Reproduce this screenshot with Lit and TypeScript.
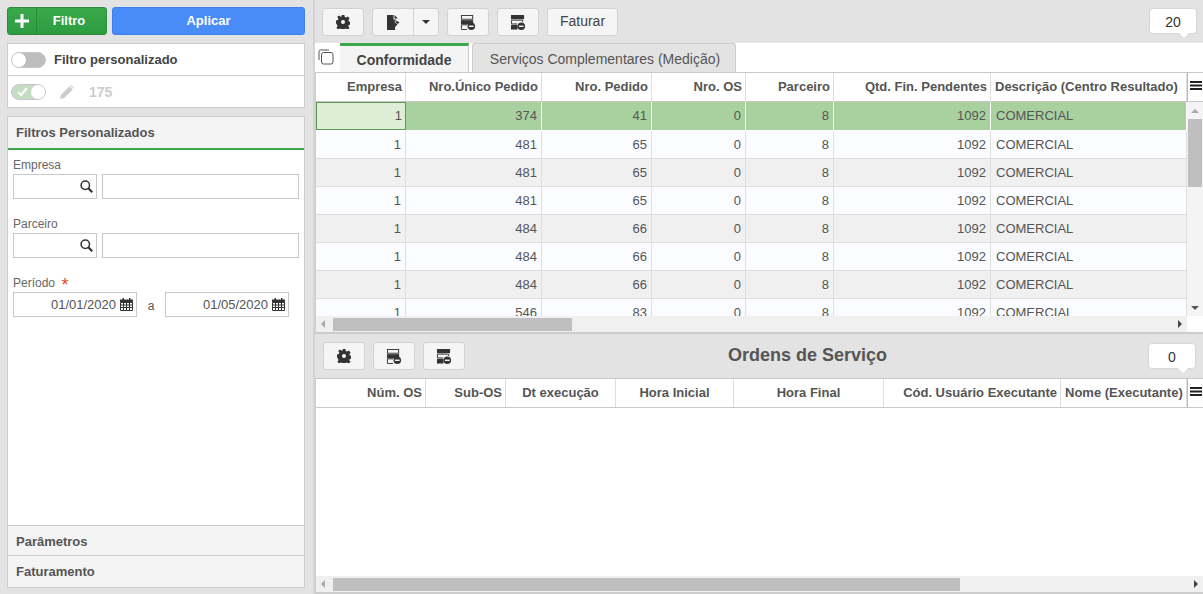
import { LitElement, html, css, svg } from "lit";
import { customElement } from "lit/decorators.js";

type Col = { label: string; width: number; align?: string };

const mainCols: Col[] = [
  { label: "Empresa", width: 90 },
  { label: "Nro.Único Pedido", width: 136 },
  { label: "Nro. Pedido", width: 110 },
  { label: "Nro. OS", width: 94 },
  { label: "Parceiro", width: 88 },
  { label: "Qtd. Fin. Pendentes", width: 157 },
  { label: "Descrição (Centro Resultado)", width: 196, align: "left" },
];

const osCols: Col[] = [
  { label: "Núm. OS", width: 110 },
  { label: "Sub-OS", width: 80 },
  { label: "Dt execução", width: 110, align: "center" },
  { label: "Hora Inicial", width: 118, align: "center" },
  { label: "Hora Final", width: 150, align: "center" },
  { label: "Cód. Usuário Executante", width: 177 },
  { label: "Nome (Executante)", width: 126, align: "left" },
];

const rows = [
  [1, 374, 41],
  [1, 481, 65],
  [1, 481, 65],
  [1, 481, 65],
  [1, 484, 66],
  [1, 484, 66],
  [1, 484, 66],
  [1, 546, 83],
].map((r) => [...r, 0, 8, 1092, "COMERCIAL"]);

const template = (cols: Col[]) => cols.map((c) => c.width + "px").join(" ");

const gear = svg`<svg width="14" height="14" viewBox="0 0 14 14"><path fill="#333" d="M5.6 0h2.8l.4 2 1.3.6L11.900 1.500l1.700 2-1.200 1.700.5 1.300 1.900.4v2.800l-2 .4-.5 1.200 1.200 1.700-1.900 1.700-1.700-1.200-1.300.5-.4 1.900H5.600l-.4-2-1.300-.5-1.700 1.200-1.800-1.800 1.200-1.700-.5-1.200L0 8.200V5.500l1.900-.4.500-1.300L1.200 2.100 3 .5l1.800 1.200 1-.4z"/><circle cx="7" cy="7" r="2" fill="#f5f5f5"/></svg>`;

const docIcon = svg`<svg width="13" height="15" viewBox="0 0 13 15"><path fill="#333" d="M0 0h6.500v4.500H9L7.500 7l3 2.500L8 12v3H0z"/><path fill="#333" d="M7.500 0L11 3.500H7.500zM9 5.500l3.500 2L10.500 9 8.500 7.300z"/></svg>`;

const stackA = svg`<svg width="16" height="15" viewBox="0 0 17 16"><rect x="1.500" y=".5" width="12" height="4" fill="none" stroke="#333"/><rect x="1" y="5.500" width="13" height="4.500" fill="#333"/><path d="M1.500 10.500v5h6" fill="none" stroke="#333"/><path d="M1.500 10.500h6" fill="none" stroke="#333"/><circle cx="12" cy="12" r="4" fill="#333"/><rect x="9.500" y="11.300" width="5" height="1.500" fill="#f5f5f5"/></svg>`;

const stackB = svg`<svg width="16" height="15" viewBox="0 0 17 16"><rect x="1" y="0" width="14" height="4.500" fill="#333"/><path d="M7.500 9.500h-6v-4h12v2" fill="none" stroke="#333"/><rect x="1" y="10.500" width="7" height="5" fill="#333"/><circle cx="12" cy="12" r="4" fill="#333"/><rect x="9.500" y="11.300" width="5" height="1.500" fill="#f5f5f5"/></svg>`;

const searchIcon = svg`<svg class="field-icon" width="13" height="13" viewBox="0 0 13 13"><circle cx="5.300" cy="5.300" r="4.200" fill="none" stroke="#333" stroke-width="1.500"/><path d="M8.300 8.300l3.900 3.900" stroke="#333" stroke-width="2.200"/></svg>`;

const calendarIcon = svg`<svg class="field-icon" width="13" height="13" viewBox="0 0 13 13"><path fill="#333" d="M0 1.500h2.500V0h1.500v1.500h5V0h1.500v1.500H13V4H0z"/><path fill="none" stroke="#333" d="M.5 4.500h12v8H.5zM.5 7h12M.5 9.500h12M3.500 4.500v8M6.500 4.500v8M9.500 4.500v8"/></svg>`;

const pencil = svg`<svg width="14" height="14" viewBox="0 0 14 14"><path fill="#ccc" d="M0 14l1-4.200L9.600 1.200l3.200 3.200L4.200 13zM10.400.5l.9-.5 2.700 2.700-.5.900z"/></svg>`;

const copyIcon = svg`<svg width="16" height="16" viewBox="0 0 16 16" fill="none" stroke="#555"><path d="M1 11V2.500Q1 1 2.500 1H11"/><rect x="3.500" y="3.500" width="11.500" height="11.500" rx="2" fill="#fff"/></svg>`;

const menuIcon = svg`<svg width="12" height="9" viewBox="0 0 12 9"><path fill="#222" d="M0 0h12v2H0zM0 3.500h12v2H0zM0 7h12v2H0z"/></svg>`;

@customElement("app-root")
export class AppRoot extends LitElement {
  static styles = css`
    :host {
      display: flex;
      width: 1203px;
      height: 594px;
      overflow: hidden;
      background: #e3e3e3;
      font-family: "Liberation Sans", Arial, sans-serif;
      font-size: 13px;
      color: #555;
    }

    .side {
      box-sizing: border-box;
      width: 315px;
      flex: none;
      padding: 7px 8px 6px 7px;
      border-right: 2px solid #d4d4d4;
      display: flex;
      flex-direction: column;
    }
    .side-actions {
      display: flex;
      gap: 5px;
      height: 28px;
      flex: none;
    }
    .add {
      box-sizing: border-box;
      width: 100px;
      display: flex;
      align-items: stretch;
      border: 1px solid #2b8a3b;
      border-radius: 3px;
      background: linear-gradient(#39aa4c, #2e9b40);
      color: #fff;
      font-weight: bold;
    }
    .add-plus {
      width: 28px;
      border-right: 1px solid #2b8a3b;
      display: flex;
      align-items: center;
      justify-content: center;
    }
    .add-label {
      flex: 1;
      display: flex;
      align-items: center;
      justify-content: center;
      padding: 0 5px 2px 0;
    }
    .apply {
      flex: 1;
      display: flex;
      align-items: center;
      justify-content: center;
      border: 1px solid #3f80ea;
      border-radius: 3px;
      background: #4a8cf7;
      color: #fff;
      font-weight: bold;
      padding-bottom: 2px;
    }
    .switches {
      margin-top: 8px;
      background: #fff;
      border: 1px solid #ccc;
      flex: none;
    }
    .switch-row {
      box-sizing: border-box;
      height: 31px;
      display: flex;
      align-items: center;
      padding-left: 3px;
      color: #444;
      font-weight: bold;
    }
    .switch-row + .switch-row {
      height: 32px;
      border-top: 1px solid #ccc;
    }
    .toggle {
      box-sizing: border-box;
      width: 35px;
      height: 16px;
      border-radius: 8px;
      background: #bdbdbd;
      border: 1px solid #c8c8c8;
      display: flex;
      align-items: center;
      margin-right: 8px;
    }
    .knob {
      width: 14px;
      height: 14px;
      border-radius: 50%;
      background: #fff;
    }
    .toggle.on {
      background: #c4dcc4;
      justify-content: flex-end;
      position: relative;
    }
    .toggle.on svg {
      position: absolute;
      left: 5px;
      top: 2px;
    }
    .edit-mark {
      margin: 0 15px 0 6px;
      display: flex;
    }
    .edit-id {
      font-size: 14px;
      color: #ccc;
    }

    .accordion {
      flex: 1;
      min-height: 0;
      margin-top: 8px;
      background: #fff;
      border: 1px solid #ccc;
      display: flex;
      flex-direction: column;
    }
    .acc-head {
      background: #f4f4f4;
      font-weight: bold;
      padding-left: 8px;
      display: flex;
      align-items: center;
      box-sizing: border-box;
      flex: none;
    }
    .acc-head.open {
      height: 33px;
      border-bottom: 2px solid #3aa84c;
    }
    .acc-head.closed {
      height: 30px;
      padding-top: 1px;
      border-top: 1px solid #ccc;
    }
    .acc-head.closed:last-child {
      height: 32px;
      padding-top: 0;
    }
    .form {
      flex: 1;
      padding: 8px 5px 0;
    }
    .label {
      font-size: 12px;
      line-height: 14px;
      color: #666;
      margin-bottom: 2px;
    }
    .req {
      color: #e2492f;
      font-size: 18px;
      line-height: 10px;
      margin-left: 3px;
      vertical-align: -4px;
    }
    .line {
      display: flex;
      align-items: center;
      margin-bottom: 18px;
    }
    .input {
      box-sizing: border-box;
      height: 25px;
      background: #fff;
      border: 1px solid #c8c8c8;
      display: flex;
      align-items: center;
      justify-content: flex-end;
      padding-right: 3px;
      gap: 4px;
    }
    .code {
      width: 84px;
      margin-right: 5px;
    }
    .desc {
      width: 197px;
    }
    .date {
      width: 124px;
    }
    .between {
      width: 28px;
      text-align: center;
      font-size: 12px;
      padding-top: 3px;
    }
    .field-icon {
      flex: none;
    }

    .main {
      flex: 1;
      min-width: 0;
      display: flex;
      flex-direction: column;
    }
    .pane-top {
      height: 334px;
      flex: none;
      box-sizing: border-box;
      border-bottom: 2px solid #ccc;
      display: flex;
      flex-direction: column;
    }
    .pane-bottom {
      flex: 1;
      min-height: 0;
      box-sizing: border-box;
      border-bottom: 2px solid #ccc;
      display: flex;
      flex-direction: column;
    }
    .toolbar {
      box-sizing: border-box;
      flex: none;
      display: flex;
      align-items: flex-start;
      gap: 8px;
      position: relative;
    }
    .pane-top .toolbar {
      height: 43px;
      padding: 8px 7px 0;
    }
    .pane-bottom .toolbar {
      height: 44px;
      padding: 8px 8px 0;
    }
    .btn {
      box-sizing: border-box;
      height: 28px;
      width: 42px;
      background: #f5f5f5;
      border: 1px solid #d2d2d2;
      border-radius: 3px;
      display: flex;
      align-items: center;
      justify-content: center;
      color: #444;
    }
    .btn.text {
      width: 71px;
      font-size: 14px;
      padding-bottom: 2px;
    }
    .btn.split {
      width: 67px;
      justify-content: flex-start;
    }
    .split-main {
      width: 40px;
      height: 100%;
      display: flex;
      align-items: center;
      justify-content: center;
      border-right: 1px solid #d2d2d2;
    }
    .split-caret {
      flex: 1;
      display: flex;
      justify-content: center;
    }
    .caret {
      width: 0;
      height: 0;
      border: 4px solid transparent;
      border-top: 4px solid #333;
      border-bottom: 0;
    }
    .title {
      flex: 1;
      text-align: center;
      font-size: 18px;
      font-weight: bold;
      padding: 3px 53px 0 0;
    }
    .count {
      position: absolute;
      box-sizing: border-box;
      width: 46px;
      height: 24px;
      background: #fff;
      border-radius: 3px;
      box-shadow: 0 0 2px #bbb;
      color: #333;
      font-size: 14px;
      line-height: 26px;
      text-align: center;
    }
    .count::after {
      content: "";
      position: absolute;
      right: 7px;
      bottom: -5px;
      border: 5px solid transparent;
      border-top: 5px solid #fff;
      border-bottom: 0;
    }
    .pane-top .count {
      right: 7px;
      top: 9px;
    }
    .pane-bottom .count {
      right: 8px;
      top: 10px;
    }

    .tabs {
      flex: none;
      height: 29px;
      background: #fff;
      display: flex;
    }
    .copy {
      width: 25px;
      padding: 6px 0 0 3px;
      box-sizing: border-box;
    }
    .tab {
      box-sizing: border-box;
      display: flex;
      align-items: center;
      justify-content: center;
      font-size: 14px;
      padding-top: 2px;
    }
    .tab.active {
      width: 129px;
      background: #f4f4f4;
      border-top: 3px solid #3aa84c;
      border-right: 1px solid #ccc;
      font-weight: bold;
      color: #444;
    }
    .tab.idle {
      width: 264px;
      margin-left: 3px;
      padding-left: 2px;
      background: #e3e3e3;
      border: 1px solid #ccc;
      border-bottom: 0;
      border-radius: 3px 3px 0 0;
    }

    .grid {
      flex: 1;
      min-height: 0;
      display: flex;
      flex-direction: column;
      background: #fff;
      border-left: 1px solid #ccc;
    }
    .head {
      flex: none;
      box-sizing: border-box;
      height: 30px;
      display: flex;
      border-top: 1px solid #c8c8c8;
      border-bottom: 1px solid #c8c8c8;
      background: #fff;
    }
    .cols {
      display: grid;
      width: 871px;
      flex: none;
    }
    .th {
      box-sizing: border-box;
      border-right: 1px solid #ddd;
      padding: 0 3px;
      font-weight: bold;
      line-height: 28px;
      text-align: right;
      white-space: nowrap;
      overflow: hidden;
    }
    .th.left {
      text-align: left;
      padding-left: 4px;
    }
    .th.center {
      text-align: center;
    }
    .grid-menu {
      flex: 1;
      border-left: 1px solid #bbb;
      display: flex;
      justify-content: center;
      padding-top: 8px;
      box-sizing: border-box;
    }
    .body {
      flex: 1;
      min-height: 0;
      display: flex;
    }
    .rows {
      width: 871px;
      flex: none;
      overflow: hidden;
    }
    .row {
      height: 28px;
      box-sizing: border-box;
      border-bottom: 1px solid #dcdcdc;
      background: #fbfcff;
    }
    .row.even {
      background: #f0f0f0;
    }
    .row.selected {
      height: 29px;
      background: #a9d1a0;
      border-bottom-color: #fff;
    }
    .td {
      box-sizing: border-box;
      border-right: 1px solid #e0e0e0;
      padding: 0 4px;
      line-height: 27px;
      text-align: right;
      white-space: nowrap;
    }
    .td.left {
      text-align: left;
      padding-left: 5px;
    }
    .row.selected .td {
      border-right-color: #fff;
    }
    .row.selected .td:first-child {
      background: #deedd5;
      border: 1px solid #5b9a50;
      line-height: 26px;
      padding-right: 3px;
    }
    .vbar {
      flex: 1;
      background: #f4f4f4;
      display: flex;
      flex-direction: column;
      align-items: center;
    }
    .arrow {
      width: 0;
      height: 0;
      flex: none;
    }
    .arrow.up {
      border: 4px solid transparent;
      border-bottom: 4px solid #aaa;
      border-top: 0;
      margin: 7px 0 6px;
    }
    .arrow.down {
      border: 4px solid transparent;
      border-top: 4px solid #555;
      border-bottom: 0;
      margin: auto 0 6px;
    }
    .arrow.back {
      border: 4px solid transparent;
      border-right: 4px solid #aaa;
      border-left: 0;
    }
    .arrow.fwd {
      border: 4px solid transparent;
      border-left: 4px solid #444;
      border-right: 0;
      margin-left: auto;
    }
    .vthumb {
      width: 14px;
      height: 68px;
      background: #bfbfbf;
      flex: none;
    }
    .hbar-wrap {
      flex: none;
      height: 16px;
      display: flex;
    }
    .hbar {
      box-sizing: border-box;
      height: 16px;
      background: #f0f0f0;
      display: flex;
      align-items: center;
      padding: 0 5px;
    }
    .hthumb {
      height: 13px;
      background: #bfbfbf;
      margin-left: 8px;
      flex: none;
    }
  `;

  private renderHead(cols: Col[]) {
    return html`<div class="head">
      <div class="cols" style="grid-template-columns:${template(cols)}">
        ${cols.map((c) => html`<div class="th ${c.align ?? ""}">${c.label}</div>`)}
      </div>
      <div class="grid-menu">${menuIcon}</div>
    </div>`;
  }

  private renderRows() {
    return rows.map((r, i) => {
      const cls = i === 0 ? "selected" : i % 2 === 0 ? "even" : "";
      return html`<div class="row cols ${cls}" style="grid-template-columns:${template(mainCols)}">
        ${r.map((v, j) => html`<div class="td ${mainCols[j].align ?? ""}">${v}</div>`)}
      </div>`;
    });
  }

  private renderSide() {
    return html`<div class="side">
      <div class="side-actions">
        <div class="add">
          <div class="add-plus">
            <svg width="14" height="14" viewBox="0 0 14 14"><path fill="#fff" d="M5.500 0h3v5.500H14v3H8.500V14h-3V8.500H0v-3h5.500z"/></svg>
          </div>
          <div class="add-label">Filtro</div>
        </div>
        <div class="apply">Aplicar</div>
      </div>

      <div class="switches">
        <div class="switch-row"><div class="toggle"><div class="knob"></div></div>Filtro personalizado</div>
        <div class="switch-row">
          <div class="toggle on">
            <svg width="11" height="10" viewBox="0 0 11 10"><path d="M1 5l3 3 6-7" fill="none" stroke="#fff" stroke-width="2"/></svg>
            <div class="knob"></div>
          </div>
          <span class="edit-mark">${pencil}</span>
          <span class="edit-id">175</span>
        </div>
      </div>

      <div class="accordion">
        <div class="acc-head open">Filtros Personalizados</div>
        <div class="form">
          <div class="label">Empresa</div>
          <div class="line">
            <div class="input code">${searchIcon}</div>
            <div class="input desc"></div>
          </div>
          <div class="label">Parceiro</div>
          <div class="line">
            <div class="input code">${searchIcon}</div>
            <div class="input desc"></div>
          </div>
          <div class="label">Período <span class="req">*</span></div>
          <div class="line">
            <div class="input date">01/01/2020 ${calendarIcon}</div>
            <div class="between">a</div>
            <div class="input date">01/05/2020 ${calendarIcon}</div>
          </div>
        </div>
        <div class="acc-head closed">Parâmetros</div>
        <div class="acc-head closed">Faturamento</div>
      </div>
    </div>`;
  }

  render() {
    return html`
      ${this.renderSide()}
      <div class="main">
        <div class="pane-top">
          <div class="toolbar">
            <div class="btn">${gear}</div>
            <div class="btn split">
              <div class="split-main">${docIcon}</div>
              <div class="split-caret"><div class="caret"></div></div>
            </div>
            <div class="btn">${stackA}</div>
            <div class="btn">${stackB}</div>
            <div class="btn text">Faturar</div>
            <div class="count">20</div>
          </div>
          <div class="tabs">
            <div class="copy">${copyIcon}</div>
            <div class="tab active">Conformidade</div>
            <div class="tab idle">Serviços Complementares (Medição)</div>
          </div>
          <div class="grid">
            ${this.renderHead(mainCols)}
            <div class="body">
              <div class="rows">${this.renderRows()}</div>
              <div class="vbar">
                <div class="arrow up"></div>
                <div class="vthumb"></div>
                <div class="arrow down"></div>
              </div>
            </div>
            <div class="hbar-wrap">
              <div class="hbar" style="width:871px">
                <div class="arrow back"></div>
                <div class="hthumb" style="width:239px"></div>
                <div class="arrow fwd"></div>
              </div>
            </div>
          </div>
        </div>

        <div class="pane-bottom">
          <div class="toolbar">
            <div class="btn">${gear}</div>
            <div class="btn">${stackA}</div>
            <div class="btn">${stackB}</div>
            <div class="title">Ordens de Serviço</div>
            <div class="count">0</div>
          </div>
          <div class="grid">
            ${this.renderHead(osCols)}
            <div class="body"></div>
            <div class="hbar-wrap">
              <div class="hbar" style="width:887px">
                <div class="arrow back"></div>
                <div class="hthumb" style="width:627px"></div>
                <div class="arrow fwd"></div>
              </div>
            </div>
          </div>
        </div>
      </div>
    `;
  }
}
